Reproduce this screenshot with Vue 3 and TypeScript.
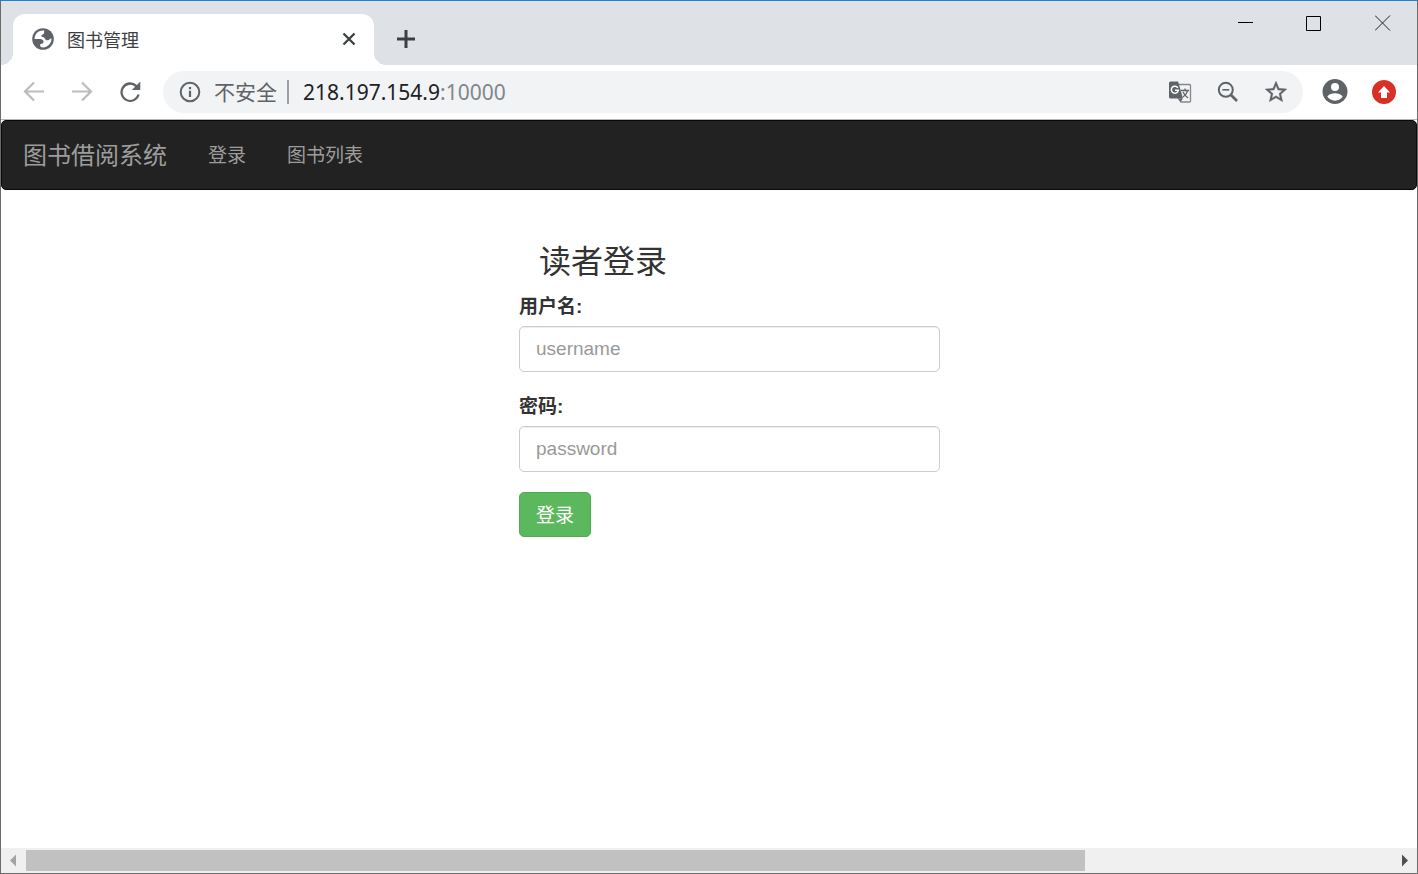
<script setup lang="ts">
import { ref } from 'vue'

const host = '218.197.154.9'
const port = ':10000'
const links = ['登录', '图书列表']
const username = ref('')
const password = ref('')
</script>

<template>
  <div class="window">
    <header class="titlebar">
      <div class="tab">
        <svg class="globe" viewBox="0 0 22 22" width="22" height="22" aria-hidden="true">
          <circle cx="11" cy="11" r="10.8" fill="#5f6368" />
          <path d="M12.500 2.500C7 1.800 2.700 5.500 2.500 10.700c2.500.6 5.300-.3 7.500.8 1.600.8 2 2.200 1.200 3.400-.8.9-2.500.3-3 1.500-.2 1 .3 2 .6 2.700C14.500 20.600 19.500 16 19.500 10.500c-1.700-.4-1.900 1.500-3.500 1.700-2 .3-3-1-3.500-2.300-.8-1.200-3-.4-3.200-1.900 0-1.500 1.700-1.500 2.500-2.300.7-.9-.2-2.200.7-3.200z" fill="#fff" />
        </svg>
        <span class="tab-title">图书管理</span>
        <button class="icon-button" type="button" aria-label="关闭标签页">
          <svg viewBox="0 0 14 14" width="14" height="14"><path d="M1.500 1.500l11 11M12.500 1.500l-11 11" stroke="#3c4043" stroke-width="2.300" fill="none" /></svg>
        </button>
      </div>
      <button class="icon-button new-tab" type="button" aria-label="新标签页">
        <svg viewBox="0 0 18 18" width="18" height="18"><path d="M9 0v18M0 9h18" stroke="#3c4043" stroke-width="3" fill="none" /></svg>
      </button>
      <div class="window-controls">
        <button class="icon-button" type="button" aria-label="最小化">
          <svg viewBox="0 0 16 16" width="16" height="16"><path d="M1 7.500h15" stroke="#000" fill="none" /></svg>
        </button>
        <button class="icon-button" type="button" aria-label="最大化">
          <svg viewBox="0 0 16 16" width="16" height="16"><path d="M.5 1.500h14v14H.5z" stroke="#000" fill="none" /></svg>
        </button>
        <button class="icon-button" type="button" aria-label="关闭">
          <svg viewBox="0 0 16 16" width="16" height="16"><path d="M0 .500l15 15M15 .500l-15 15" stroke="#222" fill="none" /></svg>
        </button>
      </div>
    </header>

    <div class="toolbar">
      <button class="icon-button" type="button" aria-label="后退">
        <svg viewBox="0 0 24 24" width="24" height="24"><path d="M22 11.500H3.500M12 2.500l-9 9 9 9" stroke="#babcbe" stroke-width="2.200" fill="none" /></svg>
      </button>
      <button class="icon-button" type="button" aria-label="前进">
        <svg viewBox="0 0 24 24" width="24" height="24"><path d="M2 11.500h18.500M12 2.500l9 9-9 9" stroke="#babcbe" stroke-width="2.200" fill="none" /></svg>
      </button>
      <button class="icon-button" type="button" aria-label="重新加载">
        <svg viewBox="0 0 24 24" width="24" height="24"><path d="M22.300 1.500v8.500h-8.500l3.300-3.300A7.500 7.500 0 1 0 19.400 14.500h2.300A9.800 9.800 0 1 1 18.900 4.900z" fill="#5f6368" /></svg>
      </button>
      <div class="omnibox">
        <svg viewBox="0 0 22 22" width="22" height="22" aria-hidden="true">
          <circle cx="11" cy="11" r="9.300" stroke="#5f6368" stroke-width="2" fill="none" />
          <path d="M11 6v2.200M11 9.800v6.200" stroke="#5f6368" stroke-width="2.200" fill="none" />
        </svg>
        <span class="insecure">不安全</span>
        <span class="address">{{ host }}<span class="port">{{ port }}</span></span>
        <button class="icon-button" type="button" aria-label="翻译此页">
          <svg viewBox="0 0 24 24" width="24" height="24">
            <path d="M10 4.500h11.500a1 1 0 0 1 1 1V21a1 1 0 0 1-1 1H13l-3-4" stroke="#83868a" stroke-width="1.300" fill="#f1f3f4" />
            <path d="M2.500 1.500h7.600L15 18.500H2.500a1.500 1.500 0 0 1-1.500-1.500V3a1.500 1.500 0 0 1 1.500-1.500z" fill="#5f6368" />
            <path d="M11 18.500h4L12.500 22z" fill="#5f6368" />
            <path d="M9.800 7.800A3.500 3.500 0 1 0 10.300 10.300H7" stroke="#fff" stroke-width="1.500" fill="none" />
            <path d="M13 10.500h8M17 8.500v2M19.500 10.500c-.5 3-2.500 5-4.500 6.500M15 12c1 2.500 2.500 4 5 6" stroke="#5f6368" stroke-width="1.300" fill="none" />
          </svg>
        </button>
        <button class="icon-button" type="button" aria-label="缩放">
          <svg viewBox="0 0 24 24" width="24" height="24">
            <circle cx="9.800" cy="9.800" r="7" stroke="#5f6368" stroke-width="2" fill="none" />
            <path d="M6.300 9.800h7" stroke="#5f6368" stroke-width="1.600" />
            <path d="M14.500 14.500l6.500 6.500" stroke="#5f6368" stroke-width="2.600" />
          </svg>
        </button>
        <button class="icon-button" type="button" aria-label="为此页添加书签">
          <svg viewBox="1 1 22 22" width="24" height="24"><path d="M22 9.240l-7.190-.62L12 2 9.190 8.630 2 9.240l5.460 4.730L5.820 21 12 17.270 18.180 21l-1.630-7.030L22 9.240zM12 15.400l-3.760 2.270 1-4.280-3.320-2.880 4.380-.38L12 6.100l1.710 4.040 4.380.38-3.320 2.880 1 4.280L12 15.400z" fill="#5f6368" stroke="#5f6368" stroke-width=".3" /></svg>
        </button>
      </div>
      <button class="icon-button" type="button" aria-label="用户">
        <svg viewBox="0 0 26 26" width="26" height="26">
          <circle cx="13" cy="12.500" r="12.500" fill="#5f6368" />
          <circle cx="13" cy="8" r="4" fill="#fff" />
          <path d="M5.300 17.500c1.600-2.400 5-3.200 7.700-3.200s6.100.8 7.700 3.200a9.200 9.200 0 0 1-15.400 0z" fill="#fff" />
        </svg>
      </button>
      <button class="icon-button" type="button" aria-label="更新">
        <svg viewBox="0 0 24 24" width="24" height="24">
          <circle cx="12" cy="12" r="12" fill="#d93025" />
          <path d="M12 6l6 6.500h-3V18H9v-5.500H6z" fill="#fff" />
        </svg>
      </button>
    </div>

    <nav class="navbar">
      <a class="brand" href="#">图书借阅系统</a>
      <a v-for="link in links" :key="link" class="nav-link" href="#">{{ link }}</a>
    </nav>

    <main class="page">
      <form class="login" @submit.prevent>
        <h3>读者登录</h3>
        <label for="username">用户名:</label>
        <input id="username" v-model="username" type="text" placeholder="username" />
        <label for="password">密码:</label>
        <input id="password" v-model="password" type="password" placeholder="password" />
        <button class="submit" type="submit">登录</button>
      </form>
    </main>

    <div class="scrollbar" aria-hidden="true">
      <svg viewBox="0 0 25 25" width="25" height="25"><path d="M15 6.500v12l-6-6z" fill="#a3a3a3" /></svg>
      <div class="track"><div class="thumb"></div></div>
      <svg viewBox="0 0 25 25" width="25" height="25"><path d="M10 6.500v12l6-6z" fill="#505050" /></svg>
    </div>
  </div>
</template>

<style>
body {
  margin: 0;
}
</style>

<style scoped>
* {
  box-sizing: border-box;
}
.window {
  display: flex;
  flex-direction: column;
  min-height: 100vh;
  border: 1px solid #6b6b6b;
  border-top-color: #1883d7;
  background: #fff;
  color: #333;
  font-family: "Liberation Sans", "Noto Sans CJK SC", sans-serif;
  font-size: 19px;
}
.icon-button {
  display: flex;
  flex: none;
  padding: 0;
  border: 0;
  background: none;
}
svg {
  display: block;
  flex: none;
}
.titlebar {
  display: flex;
  height: 64px;
  padding: 13px 26px 0 12px;
  background: #dee1e6;
}
.tab {
  position: relative;
  display: flex;
  align-items: center;
  width: 361px;
  padding: 0 18px 2px 19px;
  border-radius: 12px 12px 0 0;
  background: #fff;
}
.tab::before,
.tab::after {
  content: "";
  position: absolute;
  bottom: 0;
  width: 12px;
  height: 12px;
}
.tab::before {
  right: 100%;
  background: radial-gradient(circle at 0 0, #dee1e6 12px, #fff 12px);
}
.tab::after {
  left: 100%;
  background: radial-gradient(circle at 100% 0, #dee1e6 12px, #fff 12px);
}
.tab-title {
  flex: 1;
  margin-left: 13px;
  color: #3c4043;
  font-size: 18px;
}
.new-tab {
  align-self: center;
  margin-left: 23px;
  padding-bottom: 2px;
}
.window-controls {
  display: flex;
  gap: 53px;
  margin-left: auto;
  padding-top: 1px;
}
.window-controls .icon-button {
  align-self: flex-start;
}
.toolbar {
  display: flex;
  align-items: center;
  gap: 24px;
  height: 55px;
  padding: 0 21px;
  border-bottom: 1px solid #b4b4b4;
}
.omnibox {
  display: flex;
  flex: 1;
  align-items: center;
  gap: 24px;
  height: 42px;
  margin: 0 -5px 0 -3px;
  padding: 0 15px 0 16px;
  border-radius: 21px;
  background: #f1f3f4;
  font-family: "Noto Sans", "Noto Sans CJK SC", sans-serif;
  font-size: 21px;
  line-height: 24px;
}
.insecure {
  margin-left: -11px;
  padding-right: 10px;
  border-right: 2px solid #9aa0a6;
  color: #5f6368;
}
.address {
  flex: 1;
  margin-left: -10px;
  color: #202124;
}
.port {
  color: #80868b;
}
.navbar {
  display: flex;
  align-items: center;
  gap: 41px;
  height: 70px;
  padding: 0 21px 4px;
  border: 1px solid #080808;
  border-radius: 5px;
  background: #222;
}
.navbar a {
  color: #9d9d9d;
  text-decoration: none;
}
.brand {
  font-size: 24px;
}
.page {
  display: grid;
  flex: 1;
  grid-template-columns: 518fr 421fr 477fr;
}
.login {
  display: flex;
  grid-column: 2;
  flex-direction: column;
  align-items: flex-start;
  padding-top: 51px;
}
h3 {
  margin: 0 0 10px;
  padding-left: 20px;
  font-size: 32px;
  font-weight: 400;
  line-height: 42px;
}
label {
  font-weight: 700;
  line-height: 27px;
  margin-bottom: 6px;
}
input {
  width: 100%;
  height: 46px;
  margin-bottom: 21px;
  padding: 0 16px;
  border: 1px solid #ccc;
  border-radius: 5px;
  background: #fff;
  box-shadow: inset 0 1px 1px rgba(0, 0, 0, 0.075);
  color: #555;
  font: inherit;
}
input::placeholder {
  color: #999;
  opacity: 1;
}
.submit {
  height: 45px;
  margin-top: -1px;
  padding: 0 16px 2px;
  border: 1px solid #4cae4c;
  border-radius: 5px;
  background: #5cb85c;
  color: #fff;
  font: inherit;
}
.scrollbar {
  display: flex;
  height: 25px;
  background: #f0f0f0;
}
.track {
  flex: 1;
  padding: 2px 0;
}
.thumb {
  width: 77.5%;
  height: 21px;
  background: #c1c1c1;
}
</style>
